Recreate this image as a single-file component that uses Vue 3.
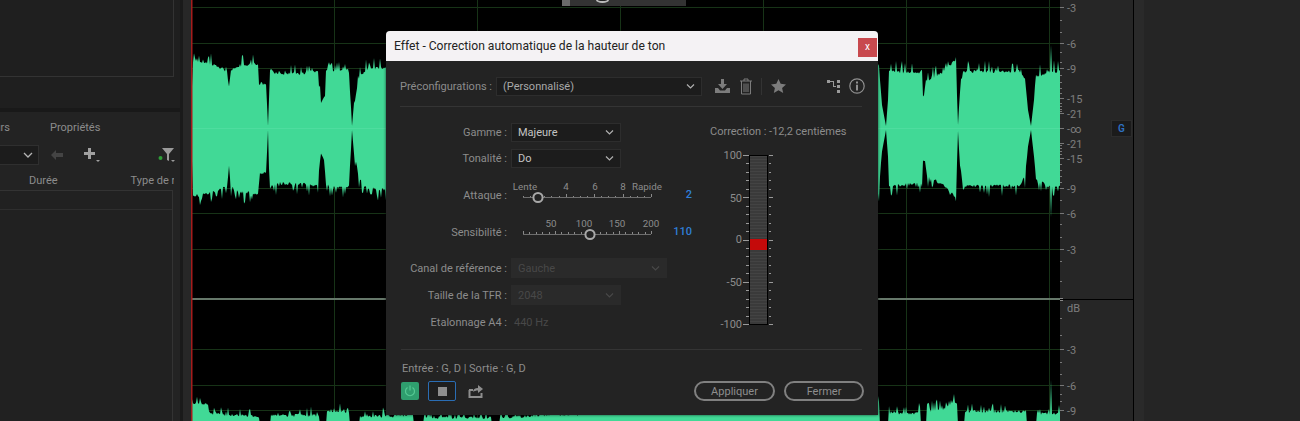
<template>
  <div class="app">
    <aside class="side">
      <div class="pane-top"><div class="pane-box"></div></div>
      <div class="pane-bottom">
        <div class="tabs">
          <div class="tab-clip"><span>Marqueurs</span></div>
          <span class="tab-props">Propriétés</span>
        </div>
        <div class="tools">
          <div class="mini-select">
            <svg width="10" height="6" viewBox="0 0 10 6"><path d="M1 1l4 4 4-4" fill="none" stroke="#b5b5b5" stroke-width="1.3"/></svg>
          </div>
          <svg class="tool-back" width="14" height="12" viewBox="0 0 14 12"><path d="M1 6l5-5v3h7v4H6v3z" fill="#444"/></svg>
          <svg class="tool-plus" width="18" height="16" viewBox="0 0 18 16"><path d="M5 1h3v4h4v3H8v4H5V8H1V5h4z" fill="#a0a0a0"/><path d="M13 13h4l-2 2z" fill="#a0a0a0"/></svg>
          <svg class="tool-funnel" width="18" height="16" viewBox="0 0 18 16"><path d="M4 1h12l-5 6v7l-2-1V7z" fill="#9a9a9a"/><circle cx="2.5" cy="11" r="2" fill="#2e9e38"/><path d="M13 13h4l-2 2z" fill="#9a9a9a"/></svg>
        </div>
        <div class="cols">
          <span class="col-a">Durée</span>
          <span class="col-b">Type de repère</span>
        </div>
        <div class="table"><div class="table-row"></div></div>
      </div>
    </aside>

    <div class="gutter"></div>

    <div class="wave-area">
      <svg class="wave" width="869" height="421" viewBox="192 0 869 421">
        <rect x="192" y="0" width="869" height="421" fill="#000" />
        <line v-for="y in gridY" :key="'h' + y" x1="193" x2="1061" :y1="y + 0.5" :y2="y + 0.5" stroke="#173317" />
        <line v-for="x in gridX" :key="'v' + x" :x1="x + 0.5" :x2="x + 0.5" y1="0" y2="421" stroke="#173317" />
        <line x1="193" x2="1061" y1="299" y2="299" stroke="#66786a" stroke-width="2" />
        <path :d="topWave" fill="#41d996" />
        <path :d="bottomWave" fill="#41d996" />
        <line x1="193" x2="1061" y1="128.5" y2="128.5" stroke="#5fe3aa" stroke-opacity="0.45" />
        <rect x="191" y="0" width="1" height="421" fill="#000" />
        <rect x="192" y="0" width="1.5" height="421" fill="#a51c1c" />
      </svg>
      <div class="zoom-bar">
        <span class="zoom-grip"></span>
        <span class="zoom-knob"></span>
      </div>
    </div>

    <svg class="ruler" width="73" height="421" viewBox="1061 0 73 421">
      <line v-for="y in minorTicks" :key="'m' + y" x1="1061" x2="1063" :y1="y + 0.5" :y2="y + 0.5" stroke="#777" />
      <g v-for="t in rulerLabels" :key="t.y">
        <line x1="1061" x2="1065" :y1="t.y + 0.5" :y2="t.y + 0.5" stroke="#777" />
        <text x="1068" :y="t.y + 4.5" class="ruler-text">{{ t.text }}</text>
      </g>
      <line x1="1061" x2="1134" y1="299.5" y2="299.5" stroke="#000" />
      <line x1="1061" x2="1064" y1="298.5" y2="298.5" stroke="#888" />
      <line x1="1061" x2="1064" y1="300.5" y2="300.5" stroke="#888" />
      <text x="1068" y="312" class="ruler-text">dB</text>
    </svg>

    <div class="mixer"></div>
    <div class="right-strip"></div>
    <div class="right-pane"></div>
    <div class="g-btn">G</div>

    <div class="dialog">
      <div class="titlebar">
        <span>Effet - Correction automatique de la hauteur de ton</span>
        <div class="close">x</div>
      </div>

      <div class="body">
        <div class="preset-row">
          <label class="preset-label">Préconfigurations :</label>
          <div class="select preset-select">
            <span>(Personnalisé)</span>
            <svg width="9" height="5" viewBox="0 0 9 5"><path d="M1 .5l3.5 3.5L8 .5" fill="none" stroke="#b0b0b0" stroke-width="1.2"/></svg>
          </div>
          <svg class="ic-save" width="17" height="16" viewBox="0 0 17 16"><path d="M7 1h3v5h3l-4.500 5L4 6h3z" fill="#7c7c7c"/><path d="M1 10h3l2 2.500h5l2-2.500h3v5H1z" fill="#7c7c7c"/></svg>
          <svg class="ic-trash" width="14" height="17" viewBox="0 0 14 17"><path d="M1 3h12M5 3V1h4v2M2.500 3v13h9V3M5 5.500V14M7 5.500V14M9 5.500V14" fill="none" stroke="#7c7c7c"/></svg>
          <span class="ic-sep"></span>
          <svg class="ic-star" width="15" height="14" viewBox="0 0 15 14"><path d="M7.500 0l2.200 4.800 5.300.6-3.900 3.500 1.100 5.100-4.700-2.700L2.800 14l1.100-5.100L0 5.400l5.300-.6z" fill="#7c7c7c"/></svg>
          <svg class="ic-route" width="13" height="14" viewBox="0 0 13 14"><path d="M0 1h3v1h4v5h2v1H6V3H3v1H0z" fill="#9a9a9a"/><path d="M10 1h3v3h-3zM10 6h3v3h-3zM10 11h3v3h-3z" fill="#9a9a9a"/></svg>
          <svg class="ic-info" width="16" height="16" viewBox="0 0 16 16"><circle cx="8" cy="8" r="7.200" fill="none" stroke="#8f8f8f" stroke-width="1.200"/><path d="M7 3.500h2v2H7zM7 6.800h2v5.700H7z" fill="#8f8f8f"/></svg>
        </div>
        <div class="divider"></div>

        <div class="main">
          <div class="params">
            <div class="row">
              <label>Gamme :</label>
              <div class="select w110">
                <span class="strong">Majeure</span>
                <svg width="9" height="5" viewBox="0 0 9 5"><path d="M1 .5l3.500 3.500L8 .5" fill="none" stroke="#b0b0b0" stroke-width="1.200"/></svg>
              </div>
            </div>
            <div class="row row-tone">
              <label>Tonalité :</label>
              <div class="select w110">
                <span class="strong">Do</span>
                <svg width="9" height="5" viewBox="0 0 9 5"><path d="M1 .5l3.500 3.500L8 .5" fill="none" stroke="#b0b0b0" stroke-width="1.200"/></svg>
              </div>
            </div>

            <div class="row slider-row attack">
              <label>Attaque :</label>
              <svg class="slider" width="155" height="26" viewBox="511 180 155 26">
                <line x1="523" x2="651" y1="197.500" y2="197.500" stroke="#6e6e6e" />
                <line v-for="t in attackTicks" :key="t.x" :x1="t.x + 0.5" :x2="t.x + 0.5" :y1="197 - t.h" y2="197" stroke="#8a8a8a" />
                <text v-for="l in attackLabels" :key="l.t" :x="l.x" y="189.500" class="tick-text">{{ l.t }}</text>
                <circle cx="538" cy="197.500" r="4.600" fill="#232323" stroke="#a8a8a8" stroke-width="2" />
              </svg>
              <span class="value">2</span>
            </div>

            <div class="row slider-row sense">
              <label>Sensibilité :</label>
              <svg class="slider" width="155" height="26" viewBox="511 217 155 26">
                <line x1="523" x2="651" y1="234.500" y2="234.500" stroke="#6e6e6e" />
                <line v-for="t in senseTicks" :key="t.x" :x1="t.x + 0.5" :x2="t.x + 0.5" :y1="234 - t.h" y2="234" stroke="#8a8a8a" />
                <text v-for="l in senseLabels" :key="l.t" :x="l.x" y="226.500" class="tick-text">{{ l.t }}</text>
                <circle cx="590" cy="234.500" r="4.600" fill="#232323" stroke="#a8a8a8" stroke-width="2" />
              </svg>
              <span class="value">110</span>
            </div>

            <div class="row row-canal">
              <label>Canal de référence :</label>
              <div class="select off w156">
                <span>Gauche</span>
                <svg width="9" height="5" viewBox="0 0 9 5"><path d="M1 .5l3.500 3.500L8 .5" fill="none" stroke="#484848" stroke-width="1.200"/></svg>
              </div>
            </div>
            <div class="row row-tfr">
              <label>Taille de la TFR :</label>
              <div class="select off w110">
                <span>2048</span>
                <svg width="9" height="5" viewBox="0 0 9 5"><path d="M1 .5l3.500 3.500L8 .5" fill="none" stroke="#484848" stroke-width="1.200"/></svg>
              </div>
            </div>
            <div class="row row-a4">
              <label>Etalonnage A4 :</label>
              <span class="hz">440 Hz</span>
            </div>
          </div>

          <div class="meter-col">
            <div class="corr">Correction : -12,2 centièmes</div>
            <svg class="meter" width="80" height="180" viewBox="710 150 80 180">
              <defs>
                <pattern id="scan" width="3" height="3" patternUnits="userSpaceOnUse">
                  <rect width="3" height="3" fill="#3a3a3a" />
                  <rect width="3" height="1" fill="#434343" />
                </pattern>
              </defs>
              <rect x="749.500" y="155.500" width="18" height="169" fill="url(#scan)" stroke="#000" />
              <rect x="750" y="239" width="17" height="11" fill="#c40a0a" />
              <g v-for="(y, i) in meterTicks" :key="y">
                <line :x1="i % 5 === 0 ? 743 : 746" x2="749" :y1="y" :y2="y" stroke="#9a9a9a" />
                <line x1="769" :x2="i % 5 === 0 ? 773 : 771" :y1="y" :y2="y" stroke="#9a9a9a" />
              </g>
              <text v-for="l in meterLabels" :key="l.t" x="742" :y="l.y" class="meter-text">{{ l.t }}</text>
            </svg>
          </div>
        </div>

        <div class="divider lower"></div>
        <div class="io">Entrée : G, D | Sortie : G, D</div>
        <div class="footer">
          <button class="power">
            <svg width="12" height="12" viewBox="0 0 12 12"><path d="M3.500 2.500a4.500 4.500 0 1 0 5 0M6 .5v5" fill="none" stroke="#55c993" stroke-width="1.200"/></svg>
          </button>
          <button class="stop"><span></span></button>
          <svg class="export" width="15" height="13" viewBox="0 0 15 13"><path d="M1 5h4M1.500 5v7h12V8" fill="none" stroke="#8e8e8e" stroke-width="2"/><path d="M5 7c0-2.500 2-4 5-4V0l5 4-5 4V5.500C8 5.500 6 6 5 7z" fill="#8e8e8e"/></svg>
          <button class="pill apply">Appliquer</button>
          <button class="pill">Fermer</button>
        </div>
      </div>
    </div>
  </div>
</template>

<script setup>
// seeded so that the waveform is the same on every load
let seed = 1337
function rnd() {
  seed = (seed * 16807) % 2147483647
  return seed / 2147483647
}

function interp(points, x) {
  for (let i = 1; i < points.length; i++) {
    if (x <= points[i][0]) {
      const [x0, y0] = points[i - 1]
      const [x1, y1] = points[i]
      return y0 + ((y1 - y0) * (x - x0)) / (x1 - x0 || 1)
    }
  }
  return points[points.length - 1][1]
}

const topEnv = [
  [193, 95], [194, 60], [195, 60], [210, 62], [225, 68], [228, 70], [230, 88], [232, 68], [240, 64], [259, 62],
  [260, 82], [267, 82], [269, 126], [271, 68], [276, 72], [300, 72], [319, 70], [320, 85], [322, 103], [326, 95],
  [327, 70], [349, 68], [350, 70], [353, 126], [355, 103], [360, 77], [367, 68], [385, 66], [878, 62], [880, 64],
  [883, 105], [887, 126], [889, 100], [890, 70], [923, 72], [924, 95], [926, 95], [928, 80], [945, 70], [955, 60],
  [957, 62], [959, 125], [961, 90], [964, 70], [1020, 70], [1026, 78], [1029, 110], [1032, 126], [1035, 100],
  [1037, 76], [1050, 70], [1061, 70]
]

const lowEnv = [
  [193, 404], [195, 402], [209, 402], [210, 412], [260, 415], [260.5, 425], [271.5, 425], [272, 414], [320, 414],
  [320.5, 425], [327, 425], [327.5, 410], [350, 410], [350.5, 425], [360, 425], [360.5, 415], [414, 414], [414.5, 425],
  [424, 425], [424.5, 416], [492, 416], [492.5, 425], [500, 425], [500.5, 416], [880, 399], [881, 425], [889.5, 425],
  [890, 412], [921, 412], [921.5, 425], [927, 425], [927.5, 410], [945, 407], [955, 399], [958, 402], [958.5, 425],
  [965, 425], [965.5, 410], [1027, 410], [1027.5, 425], [1037, 425], [1037.5, 412], [1061, 412]
]

function buildTop() {
  const up = []
  const down = []
  for (let x = 193; x <= 1061; x++) {
    const y = interp(topEnv, x)
    const h = 128 - y
    let a = y
    let b = 128 + h * 1.02
    if (h > 30) {
      a += rnd() < 0.22 ? -rnd() * 10 : rnd() * 3
      b += rnd() < 0.22 ? rnd() * 10 : -rnd() * 3
    }
    if (x === 1052) { a = 45; b = 217 }
    up.push(`${x} ${a.toFixed(1)}`)
    down.unshift(`${x} ${b.toFixed(1)}`)
  }
  return 'M' + up.join('L') + 'L' + down.join('L') + 'Z'
}

function buildLow() {
  const up = []
  for (let x = 193; x <= 1061; x++) {
    let y = interp(lowEnv, x)
    if (y < 421) y += rnd() < 0.25 ? -rnd() * 9 : rnd() * 3
    if (x === 1052) y = 380
    up.push(`${x} ${y.toFixed(1)}`)
  }
  return 'M193 425L' + up.join('L') + 'L1061 425Z'
}

const topWave = buildTop()
const bottomWave = buildLow()

const gridY = [7, 43, 68, 188, 213, 249, 349, 385, 410]
const gridX = [335, 478, 621, 764, 907, 1050]
const minorTicks = [20, 32, 52, 62, 75, 82, 88, 93, 103, 106, 109, 111, 145, 148, 151, 154, 164, 170, 176, 182, 200, 224, 237, 261, 281, 318, 335, 362, 374, 394, 401]
const rulerLabels = [
  { y: 7, text: '-3' }, { y: 43, text: '-6' }, { y: 68, text: '-9' }, { y: 98, text: '-15' },
  { y: 113, text: '-21' }, { y: 128, text: '-∞' }, { y: 143, text: '-21' }, { y: 158, text: '-15' },
  { y: 188, text: '-9' }, { y: 213, text: '-6' }, { y: 249, text: '-3' }, { y: 349, text: '-3' },
  { y: 385, text: '-6' }, { y: 410, text: '-9' }
]

const attackTicks = []
for (let i = 0; i <= 9; i++) {
  attackTicks.push({ x: Math.round(523 + (128 / 9) * i), h: i % 2 === 1 ? 3 : 1 })
  attackTicks.push({ x: Math.round(523 + (128 / 9) * (i + 0.5)), h: 1 })
}
attackTicks.splice(attackTicks.length - 1, 1)

const attackLabels = [
  { t: 'Lente', x: 525 }, { t: '4', x: 566 }, { t: '6', x: 595 }, { t: '8', x: 623 }, { t: 'Rapide', x: 647 }
]

const senseTicks = []
for (let i = 0; i <= 20; i++) {
  senseTicks.push({ x: Math.round(523 + (128 / 20) * i), h: i % 5 === 0 ? 3 : 2 })
}
const senseLabels = [
  { t: '50', x: 551 }, { t: '100', x: 584 }, { t: '150', x: 617 }, { t: '200', x: 651 }
]

const meterTicks = []
for (let i = 0; i <= 20; i++) meterTicks.push(Math.round(155 + 8.45 * i) + 0.5)
const meterLabels = [
  { t: '100', y: 159 }, { t: '50', y: 201.500 }, { t: '0', y: 243 }, { t: '-50', y: 286 }, { t: '-100', y: 328 }
]
</script>

<style scoped>
.app {
  position: relative;
  display: flex;
  width: 1300px;
  height: 421px;
  overflow: hidden;
  background: #232323;
  font-family: Roboto, "Open Sans", sans-serif;
  font-size: 11px;
  color: #8c8c8c;
}

.side {
  width: 180px;
  flex: none;
  display: flex;
  flex-direction: column;
  overflow: hidden;
}

.pane-top {
  height: 108px;
  flex: none;
  background: #1f1f1f;
  padding-right: 6px;
  border-bottom: 4px solid #191919;
}

.pane-box {
  height: 76px;
  border-right: 1px solid #333;
  border-bottom: 1px solid #333;
}

.pane-bottom {
  flex: 1;
  background: #232323;
}

.tabs {
  display: flex;
  height: 30px;
  align-items: center;
  color: #8c8c8c;
}

.tab-clip {
  width: 10px;
  overflow: hidden;
  display: flex;
  justify-content: flex-end;
}

.tab-props {
  margin-left: 40px;
}

.tools {
  display: flex;
  align-items: center;
  height: 20px;
  margin-top: 3px;
}

.mini-select {
  width: 39px;
  height: 20px;
  background: #1c1c1c;
  border: 1px solid #2f2f2f;
  border-left: none;
  display: flex;
  align-items: center;
  justify-content: flex-end;
  padding-right: 5px;
  box-sizing: border-box;
}

.tool-back {
  margin-left: 11px;
}

.tool-plus {
  margin-left: 19px;
}

.tool-funnel {
  margin-left: 57px;
}

.cols {
  height: 20px;
  padding-top: 5px;
  display: flex;
  align-items: center;
  width: 174px;
  overflow: hidden;
  white-space: nowrap;
}

.col-a {
  margin-left: 29px;
}

.col-b {
  margin-left: 73px;
}

.table {
  width: 173px;
  height: 240px;
  box-sizing: border-box;
  background: #212121;
  border-top: 1px solid #333;
  border-right: 1px solid #333;
}

.table-row {
  height: 18px;
  border-bottom: 1px solid #2e2e2e;
}

.gutter {
  width: 11px;
  flex: none;
  background: linear-gradient(90deg, #1a1a1a 0 3px, #272727 3px);
}

.wave-area {
  position: relative;
  width: 869px;
  height: 421px;
  flex: none;
}

.wave {
  display: block;
}

.zoom-bar {
  position: absolute;
  left: 371px;
  top: 0;
  width: 124px;
  height: 6px;
  background: #333;
}

.zoom-grip {
  position: absolute;
  left: 0;
  top: 0;
  width: 8px;
  height: 6px;
  background: #6a6a6a;
}

.zoom-knob {
  position: absolute;
  left: 34px;
  top: -3px;
  width: 13px;
  height: 6px;
  border-radius: 50%;
  background: #222;
  border: 2px solid #bbb;
  box-sizing: border-box;
}

.ruler {
  flex: none;
  display: block;
  background: #262626;
}

.ruler-text {
  font-size: 11px;
  fill: #7e7e7e;
}

.mixer {
  width: 1px;
  flex: none;
  background: #000;
}

.right-strip {
  width: 10px;
  flex: none;
  background: #2a2a2a;
}

.right-pane {
  flex: 1;
  background: #252525;
}

.g-btn {
  position: absolute;
  left: 1111px;
  top: 120px;
  width: 21px;
  height: 17px;
  background: #1b1b1b;
  border: 1px solid #2c2c2c;
  box-sizing: border-box;
  color: #2f72c4;
  font-size: 10px;
  font-weight: 600;
  text-align: center;
  line-height: 15px;
}

.dialog {
  position: absolute;
  left: 386px;
  top: 31px;
  width: 492px;
  height: 384px;
  display: flex;
  flex-direction: column;
  background: #232323;
  border-radius: 4px 4px 0 0;
  overflow: hidden;
  box-shadow: 0 0 3px rgba(0, 0, 0, 0.7);
}

.titlebar {
  height: 30px;
  flex: none;
  background: #f4f2f4;
  color: #222;
  font-size: 12.1px;
  padding-left: 8px;
  display: flex;
  align-items: center;
  justify-content: space-between;
}

.close {
  width: 19px;
  height: 19px;
  margin-right: 1px;
  margin-top: 2px;
  background: #c8494e;
  color: #fff;
  font-size: 10px;
  line-height: 17px;
  text-align: center;
}

.body {
  flex: 1;
  padding: 15px 16px 0 14px;
}

.preset-row {
  display: flex;
  align-items: center;
  height: 20px;
}

.preset-row > * {
  flex: none;
}

.preset-label {
  width: 92px;
  white-space: nowrap;
}

.select {
  display: flex;
  align-items: center;
  justify-content: space-between;
  box-sizing: border-box;
  height: 19px;
  padding: 0 6px 0 6px;
  background: #1c1c1c;
  border: 1px solid #2d2d2d;
  color: #a8a8a8;
}

.preset-select {
  width: 206px;
  margin-left: 4px;
}

.ic-save {
  margin-left: 12px;
}

.ic-trash {
  margin-left: 8px;
}

.ic-sep {
  width: 1px;
  height: 17px;
  margin-left: 8px;
  background: #333;
}

.ic-star {
  margin-left: 9px;
}

.ic-route {
  margin-left: 41px;
}

.ic-info {
  margin-left: 9px;
}

.divider {
  height: 1px;
  margin-top: 10px;
  background: #343434;
}

.main {
  display: flex;
  padding-top: 16px;
  height: 242px;
  box-sizing: border-box;
}

.params {
  width: 292px;
  flex: none;
}

.row {
  display: flex;
  align-items: center;
  height: 19px;
}

.row label {
  width: 107px;
  margin-right: 4px;
  flex: none;
  text-align: right;
  white-space: nowrap;
}

.w110 {
  width: 110px;
}

.w156 {
  width: 156px;
}

.strong {
  color: #c4c4c4;
}

.row-tone {
  margin-top: 7px;
}

.slider-row {
  height: 26px;
}

.slider-row label {
  padding-top: 4px;
}

.attack {
  margin-top: 12px;
}

.sense {
  margin-top: 11px;
}

.slider {
  flex: none;
  display: block;
}

.tick-text {
  font-size: 9.8px;
  fill: #8c8c8c;
  text-anchor: middle;
}

.value {
  flex: 1;
  text-align: right;
  color: #2f7fd8;
  font-weight: 500;
  padding-top: 3px;
}

.off {
  height: 20px;
  background: #2a2a2a;
  border-color: #2a2a2a;
  color: #484848;
}

.row-canal {
  height: 20px;
  margin-top: 15px;
}

.row-tfr {
  height: 20px;
  margin-top: 7px;
}

.row-a4 {
  height: 20px;
  margin-top: 7px;
}

.hz {
  color: #484848;
  padding-left: 3px;
}

.meter-col {
  margin-left: 18px;
}

.corr {
  height: 18px;
  line-height: 18px;
  white-space: nowrap;
}

.meter {
  display: block;
  margin-top: 9px;
}

.meter-text {
  font-size: 11px;
  fill: #8c8c8c;
  text-anchor: end;
}

.lower {
  margin-top: 0;
  margin-left: 1px;
}

.io {
  margin: 11px 0 0 2px;
  height: 15px;
  line-height: 15px;
}

.footer {
  display: flex;
  align-items: center;
  height: 20px;
  margin-top: 5px;
  margin-right: -2px;
  padding-left: 1px;
}

.power {
  width: 18px;
  height: 18px;
  padding: 0;
  border: none;
  border-radius: 2px;
  background: #2f9e6e;
  display: flex;
  align-items: center;
  justify-content: center;
}

.stop {
  width: 28px;
  height: 20px;
  margin-left: 9px;
  padding: 0;
  border: 1px solid #2a6db4;
  border-radius: 2px;
  background: #1e1e1e;
  display: flex;
  align-items: center;
  justify-content: center;
}

.stop span {
  width: 9px;
  height: 9px;
  background: #8e8e8e;
}

.export {
  margin-left: 12px;
}

.pill {
  width: 80px;
  height: 20px;
  margin-left: 9px;
  padding: 0;
  font: inherit;
  color: #8e8e8e;
  background: transparent;
  border: 2px solid #808080;
  border-radius: 10px;
}

.apply {
  margin-left: auto;
  width: 81px;
}
</style>

<style>
html,
body {
  margin: 0;
  background: #232323;
}
</style>
